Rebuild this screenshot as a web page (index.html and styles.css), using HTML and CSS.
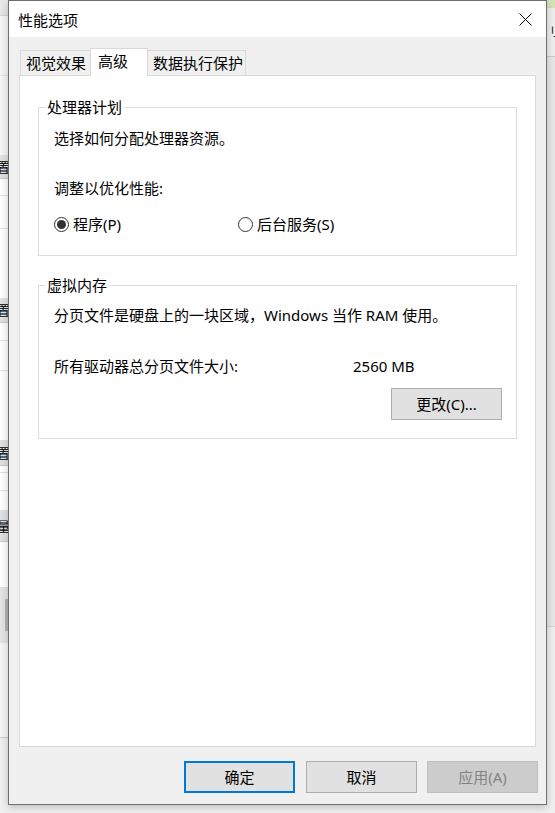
FILE: index.html
```html
<!DOCTYPE html>
<html lang="zh-CN">
<head>
  <meta charset="UTF-8">
  <meta name="viewport" content="width=device-width, initial-scale=1.0">
  <title>性能选项</title>
  <link rel="stylesheet" href="styles.css">
</head>
<body>
  <div class="desk">
    <!-- the window behind, left edge -->
    <div class="behind">
      <div class="row r16 head"></div>
      <div class="row r60 soft line"></div>
      <div class="row r79 soft"></div>
      <div class="row r24 band"><span>置</span></div>
      <div class="row r17 line"></div>
      <div class="row r33 line"></div>
      <div class="row r69"></div>
      <div class="row r25 band"><span>置</span></div>
      <div class="row r18 line"></div>
      <div class="row r30 line"></div>
      <div class="row r69"></div>
      <div class="row r26 band"><span>置</span></div>
      <div class="row r7 line"></div>
      <div class="row r18 line"></div>
      <div class="row r19"></div>
      <div class="row r32 band"><span>量(</span></div>
      <div class="row r45"></div>
      <div class="row r56 tool"><div class="tool-bar"></div></div>
      <div class="row r95 soft dark-line"></div>
      <div class="row rest"></div>
    </div>

    <div class="dialog">
      <div class="titlebar">
        <span class="title">性能选项</span>
        <button class="close">
          <svg width="13" height="13" viewBox="0 0 13 13">
            <path d="M0.5 0.5L12.5 12.5M12.5 0.5L0.5 12.5" stroke="#000" stroke-width="1" fill="none"/>
          </svg>
        </button>
      </div>

      <div class="content">
        <div class="tabs">
          <div class="tab tab-first">视觉效果</div>
          <div class="tab active">高级</div>
          <div class="tab tab-last">数据执行保护</div>
        </div>

        <div class="panel">
          <fieldset class="group cpu">
            <legend>处理器计划</legend>
            <div class="group-body">
              <p class="line-first">选择如何分配处理器资源。</p>
              <p class="line-gap">调整以优化性能:</p>
              <div class="radios">
                <label class="radio checked"><span class="radio-dot"></span>程序(P)</label>
                <label class="radio"><span class="radio-dot"></span>后台服务(S)</label>
              </div>
            </div>
          </fieldset>

          <fieldset class="group vm">
            <legend>虚拟内存</legend>
            <div class="group-body">
              <p class="line-first">分页文件是硬盘上的一块区域，Windows 当作 RAM 使用。</p>
              <div class="size-row">
                <span class="size-label">所有驱动器总分页文件大小:</span>
                <span>2560 MB</span>
              </div>
              <div class="change-row">
                <button class="btn">更改(C)...</button>
              </div>
            </div>
          </fieldset>
        </div>

        <div class="actions">
          <button class="btn btn-default">确定</button>
          <button class="btn">取消</button>
          <button class="btn" disabled>应用(A)</button>
        </div>
      </div>
    </div>

    <!-- the window behind, right edge -->
    <div class="behind">
      <div class="row r8 green"></div>
      <div class="row r49 soft side-top"><span>刂三</span></div>
      <div class="row r570 grey"></div>
      <div class="row rest"></div>
    </div>
  </div>
</body>
</html>
```

FILE: styles.css
```css
body{
  margin: 0;
  font-family: "Noto Sans", "Noto Sans CJK SC", sans-serif;
  font-size: 15px;
  line-height: 20px;
  color: #000;
  background: #f0f0f0;
}
p{
  margin: 0;
}

.desk{
  display: flex;
  width: 555px;
  height: 813px;
  overflow: hidden;
}

/* background window strips */
.behind{
  flex: none;
  width: 8px;
  display: flex;
  flex-direction: column;
  overflow: hidden;
  font-size: 13px;
  background: #f0f0f0;
}
.behind .row{
  flex: none;
  box-sizing: border-box;
  background: #fff;
  overflow: hidden;
}
.behind .head{ background: #e8e8e8; border-bottom: 1px solid #d4d4d4; }
.behind .soft{ background: #f6f6f6; }
.behind .line{ border-bottom: 1px solid #e2e2e2; }
.behind .dark-line{ border-bottom: 1px solid #cfcfcf; }
.behind .band{
  display: flex;
  align-items: center;
  background: #e1e1e1;
  border-bottom: 1px solid #cacaca;
  white-space: nowrap;
}
.behind .band span{
  margin-left: -3px;
}
.behind .tool{ background: #e4e4e4; padding: 12px 0 0 5px; }
.behind .tool-bar{
  width: 3px;
  height: 32px;
  background: #b4b4b4;
}
.behind .green{ background: #d3e5b6; }
.behind .side-top{
  display: flex;
  align-items: center;
  white-space: nowrap;
  border-bottom: 1px solid #c8c8c8;
  background: #efefef;
}
.behind .side-top span{ font-size: 12px; margin-left: -1px; }
.behind .grey{ background: #e8e8e8; border-bottom: 1px solid #d6d6d6; }
.behind .rest{ flex: 1; background: #f0f0f0; }

.r7{ height: 7px; }
.r8{ height: 8px; }
.r16{ height: 16px; }
.r17{ height: 17px; }
.r18{ height: 18px; }
.r19{ height: 19px; }
.r24{ height: 24px; }
.r25{ height: 25px; }
.r26{ height: 26px; }
.r30{ height: 30px; }
.r32{ height: 32px; }
.r33{ height: 33px; }
.r45{ height: 45px; }
.r49{ height: 49px; }
.r56{ height: 56px; }
.r60{ height: 60px; }
.r69{ height: 69px; }
.r79{ height: 79px; }
.r95{ height: 95px; }
.r570{ height: 570px; }

/* dialog */
.dialog{
  flex: none;
  position: relative;
  z-index: 1;
  width: 539px;
  height: 805px;
  box-sizing: border-box;
  border: 1px solid #6f6f6f;
  background: #f0f0f0;
  display: flex;
  flex-direction: column;
  box-shadow: 0 2px 8px rgba(0, 0, 0, 0.22);
}
.titlebar{
  flex: none;
  height: 36px;
  background: #fff;
  display: flex;
  align-items: center;
}
.title{
  flex: 1;
  padding: 1px 0 0 9px;
}
.close{
  width: 42px;
  height: 36px;
  padding: 0;
  border: none;
  background: none;
  display: flex;
  align-items: center;
  justify-content: center;
}

.content{
  flex: 1;
  padding: 11px 10px 11px;
  display: flex;
  flex-direction: column;
}

.tabs{
  display: flex;
  align-items: flex-end;
  margin-left: 1px;
}
.tab{
  border: 1px solid #d9d9d9;
  border-bottom: none;
  background: #f0f0f0;
  padding: 2px 2px 2px 5px;
  white-space: nowrap;
}
.tab-first{
  border-right: none;
  padding-right: 4px;
}
.tab-last{
  border-left: none;
}
.tab.active{
  position: relative;
  z-index: 1;
  background: #fff;
  padding: 2px 19px 5px 7px;
  margin-bottom: -1px;
}

.panel{
  flex: none;
  height: 672px;
  box-sizing: border-box;
  border: 1px solid #d9d9d9;
  background: #fff;
  padding: 21px 18px 0 18px;
}

.group{
  margin: 0;
  padding: 0;
  min-width: 0;
  border: 1px solid #dcdcdc;
}
.group + .group{
  margin-top: 19px;
}
.group legend{
  margin-left: 6px;
  padding: 0 2px;
}
.group-body{
  padding: 0 14px 21px 15px;
}
.vm .group-body{
  padding-bottom: 18px;
}
.cpu .line-first{
  margin-top: 11px;
}
.vm .line-first{
  margin-top: 10px;
}
.line-gap{
  margin-top: 30px;
}

.radios{
  display: flex;
  margin-top: 16px;
}
.radio{
  display: flex;
  align-items: center;
}
.radio:first-child{
  width: 184px;
}
.radio-dot{
  width: 15px;
  height: 15px;
  box-sizing: border-box;
  margin-right: 4px;
  border: 1px solid #333;
  border-radius: 50%;
  display: flex;
  align-items: center;
  justify-content: center;
}
.radio.checked .radio-dot::after{
  content: '';
  width: 9px;
  height: 9px;
  border-radius: 50%;
  background: #333;
}

.size-row{
  display: flex;
  margin-top: 31px;
}
.size-label{
  width: 299px;
}
.change-row{
  display: flex;
  justify-content: flex-end;
  margin-top: 12px;
}

.btn{
  width: 111px;
  height: 32px;
  box-sizing: border-box;
  padding: 0;
  border: 1px solid #adadad;
  background: #e1e1e1;
  font: inherit;
  color: #000;
}
.btn-default{
  border: 2px solid #0078d7;
  margin-right: 1px;
}
.btn:disabled{
  background: #cccccc;
  border-color: #bfbfbf;
  color: #838383;
}

.actions{
  flex: none;
  display: flex;
  justify-content: flex-end;
  gap: 10px;
  margin: 14px -2px 0 0;
}
```
